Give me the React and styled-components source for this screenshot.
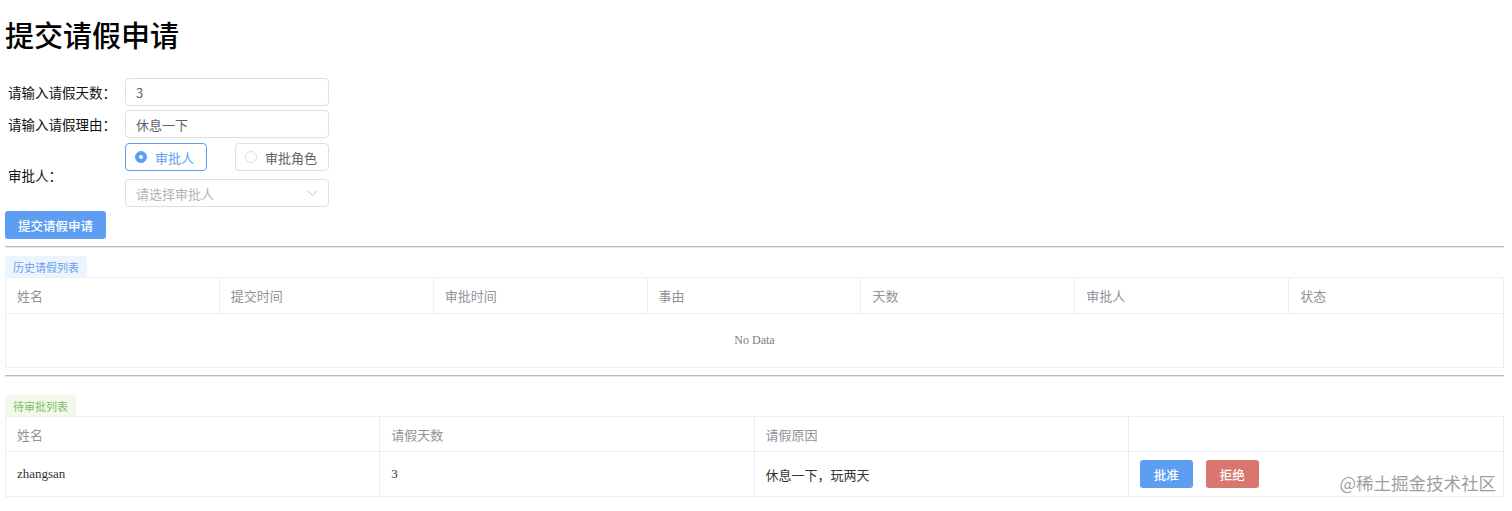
import React from "react";
import styled, { createGlobalStyle } from "styled-components";

const Global = createGlobalStyle`
  html, body { margin: 0; padding: 0; background: #fff; }
  body { font-family: "Liberation Serif", "Noto Sans CJK SC", serif; color: #000; }
  * { box-sizing: border-box; }
`;

const Page = styled.div`
  position: relative;
  padding: 0 8px 0 5px;
  min-height: 511px;
`;

const Title = styled.h1`
  margin: 0;
  padding: 19px 0 22px;
  font-size: 29px;
  line-height: 37px;
  font-weight: 500;
  font-family: "Liberation Serif", "Noto Sans CJK SC", serif;
`;

const Form = styled.div`
  display: grid;
  grid-template-columns: 120px 204px;
  grid-auto-rows: auto;
  row-gap: 4px;
  align-items: center;
`;

const Label = styled.label`
  padding-left: 3px;
  font-size: 13.5px;
  font-family: "Liberation Serif", "Noto Sans CJK SC", serif;
  color: #111;
  grid-row: ${(p) => p.$span || "auto"};
`;

const Input = styled.div`
  height: 28px;
  border: 1px solid #dcdfe6;
  border-radius: 4px;
  padding: 0 10px;
  display: flex;
  align-items: center;
  font-family: "Noto Sans CJK SC", sans-serif;
  font-size: 13px;
  color: ${(p) => (p.$placeholder ? "#b0b3b9" : "#606266")};
  justify-content: space-between;
`;

const RadioRow = styled.div`
  display: flex;
  gap: 28px;
  margin-top: 1px;
  margin-bottom: 4px;
`;

const RadioBox = styled.div`
  height: 28px;
  width: ${(p) => p.$w}px;
  border: 1px solid ${(p) => (p.$checked ? "#5e9ef2" : "#dcdfe6")};
  border-radius: 4px;
  display: flex;
  align-items: center;
  gap: 8px;
  padding-left: 9px;
  font-family: "Noto Sans CJK SC", sans-serif;
  font-size: 13px;
  color: ${(p) => (p.$checked ? "#5e9ef2" : "#606266")};
`;

const Dot = styled.span`
  width: 12px;
  height: 12px;
  border-radius: 50%;
  border: 1px solid ${(p) => (p.$checked ? "#5e9ef2" : "#dcdfe6")};
  background: ${(p) => (p.$checked ? "#5e9ef2" : "#fff")};
  display: flex;
  align-items: center;
  justify-content: center;
  &::after {
    content: "";
    width: 4px;
    height: 4px;
    border-radius: 50%;
    background: #fff;
  }
`;

const Button = styled.button`
  height: 28px;
  padding: 0 ${(p) => p.$px || 13}px;
  border: none;
  border-radius: 3px;
  background: ${(p) => (p.$danger ? "#d9766f" : "#5e9ef2")};
  color: #fff;
  font-family: "Noto Sans CJK SC", sans-serif;
  font-size: 12.5px;
  font-weight: 500;
  cursor: pointer;
`;

const SubmitRow = styled.div`
  margin-top: 4px;
`;

const Divider = styled.div`
  height: 2px;
  background: #bdbdbd;
  border-bottom: 1px solid #e8e8e8;
  margin: ${(p) => p.$m};
`;

const Tag = styled.div`
  display: inline-flex;
  align-items: center;
  height: 21px;
  padding: 0 8px;
  border-radius: 4px 4px 0 0;
  font-family: "Noto Sans CJK SC", sans-serif;
  font-size: 11px;
  background: ${(p) => (p.$green ? "#f0f9eb" : "#ecf5ff")};
  color: ${(p) => (p.$green ? "#7fbf5a" : "#6a9ee8")};
`;

const Table = styled.div`
  border: 1px solid #ebeef5;
  display: grid;
  grid-template-columns: repeat(${(p) => p.$cols}, 1fr);
  font-family: "Liberation Serif", "Noto Sans CJK SC", serif;
  font-size: 13px;
`;

const Th = styled.div`
  height: ${(p) => p.$h}px;
  display: flex;
  align-items: center;
  padding-left: 11px;
  color: #909399;
  border-bottom: 1px solid #ebeef5;
  border-right: ${(p) => (p.$last ? "none" : "1px solid #ebeef5")};
`;

const Td = styled.div`
  height: 44px;
  display: flex;
  align-items: center;
  gap: 13px;
  padding-left: 11px;
  color: #333;
  border-right: ${(p) => (p.$last ? "none" : "1px solid #ebeef5")};
`;

const Empty = styled.div`
  grid-column: 1 / -1;
  height: 53px;
  display: flex;
  align-items: center;
  justify-content: center;
  color: #7a7d82;
  font-size: 12px;
`;

const Watermark = styled.div`
  position: absolute;
  right: 16px;
  bottom: 16px;
  font-family: "Noto Sans CJK SC", sans-serif;
  font-size: 17.5px;
  color: rgba(140, 140, 140, 0.85);
  text-shadow: 0 0 2px #fff;
  pointer-events: none;
`;

const Chevron = () => (
  <svg width="11" height="7" viewBox="0 0 11 7" fill="none">
    <path d="M1 1l4.5 4.5L10 1" stroke="#c0c4cc" strokeWidth="1" />
  </svg>
);

const historyCols = ["姓名", "提交时间", "审批时间", "事由", "天数", "审批人", "状态"];
const pendingCols = ["姓名", "请假天数", "请假原因", ""];

export default function App() {
  return (
    <Page>
      <Global />
      <Title>提交请假申请</Title>
      <Form>
        <Label>请输入请假天数：</Label>
        <Input>3</Input>
        <Label>请输入请假理由：</Label>
        <Input>休息一下</Input>
        <Label $span="span 2">审批人：</Label>
        <RadioRow>
          <RadioBox $checked $w={82}>
            <Dot $checked />
            审批人
          </RadioBox>
          <RadioBox $w={94}>
            <Dot />
            审批角色
          </RadioBox>
        </RadioRow>
        <Input $placeholder>
          请选择审批人
          <Chevron />
        </Input>
      </Form>
      <SubmitRow>
        <Button $px={13}>提交请假申请</Button>
      </SubmitRow>
      <Divider $m="7px 0 8px" />
      <Tag>历史请假列表</Tag>
      <Table $cols={7}>
        {historyCols.map((c, i) => (
          <Th key={c} $h={36} $last={i === historyCols.length - 1}>
            {c}
          </Th>
        ))}
        <Empty>No Data</Empty>
      </Table>
      <Divider $m="7px 0 18px" />
      <Tag $green>待审批列表</Tag>
      <Table $cols={4}>
        {pendingCols.map((c, i) => (
          <Th key={i} $h={35} $last={i === pendingCols.length - 1}>
            {c}
          </Th>
        ))}
        <Td>zhangsan</Td>
        <Td>3</Td>
        <Td>休息一下，玩两天</Td>
        <Td $last>
          <Button $px={14}>批准</Button>
          <Button $danger $px={14}>拒绝</Button>
        </Td>
      </Table>
      <Watermark>@稀土掘金技术社区</Watermark>
    </Page>
  );
}
